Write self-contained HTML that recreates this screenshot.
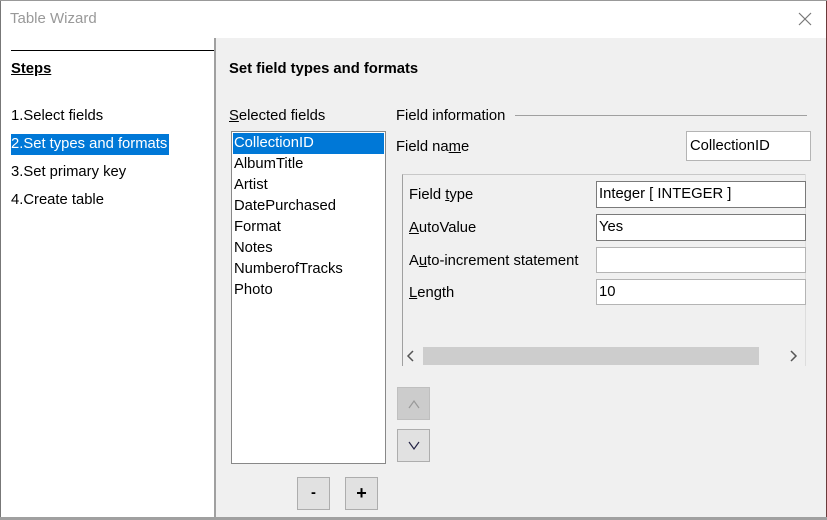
<!DOCTYPE html>
<html><head><meta charset="utf-8"><style>
*{margin:0;padding:0;box-sizing:border-box}
body{width:827px;height:520px;overflow:hidden;background:#fff;font-family:"Liberation Sans",sans-serif;font-size:14.8px;color:#000;position:relative}
.a{position:absolute;white-space:nowrap}
.l{line-height:20px}
u{text-decoration:underline}
.inp{position:absolute;background:#fff;border:1px solid #b4b4b4;padding-left:2px;line-height:24px}
.btn{position:absolute;width:33px;height:33px;border:1px solid #adadad;background:#e1e1e1;text-align:center;line-height:31px}
</style></head><body>
<div class="a" style="left:0;top:0;width:1px;height:520px;background:#777"></div>
<div class="a" style="left:826px;top:0;width:1px;height:520px;background:#6b3a3a"></div>
<div class="a" style="left:0;top:0;width:827px;height:1px;background:#999"></div>
<div class="a l" style="left:10px;top:9px;color:#999;font-size:15px">Table Wizard</div>
<svg class="a" style="left:798px;top:12px" width="14" height="14"><path d="M1 1L13 13M13 1L1 13" stroke="#777" stroke-width="1.2"/></svg>

<div class="a" style="left:215px;top:38px;width:611px;height:480px;background:#f0f0f0"></div>
<div class="a" style="left:214px;top:38px;width:2px;height:480px;background:#a0a0a0"></div>
<div class="a" style="left:0;top:517px;width:827px;height:3px;background:#a0a0a0"></div>

<div class="a" style="left:11px;top:50px;width:203px;height:1px;background:#000"></div>
<div class="a l" style="left:11px;top:59px;font-weight:bold"><u>Steps</u></div>
<div class="a l" style="left:11px;top:106px">1.Select fields</div>
<div class="a l" style="left:11px;top:134px;background:#0078d7;color:#fff;padding-right:2px;height:21px">2.Set types and formats</div>
<div class="a l" style="left:11px;top:162px">3.Set primary key</div>
<div class="a l" style="left:11px;top:190px">4.Create table</div>

<div class="a l" style="left:229px;top:59px;font-weight:bold">Set field types and formats</div>
<div class="a l" style="left:229px;top:106px"><u>S</u>elected fields</div>
<div class="a" style="left:231px;top:131px;width:155px;height:333px;background:#fff;border:1px solid #888"></div>
<div class="a" style="left:233px;top:133px;width:151px;height:21px;background:#0078d7"></div>
<div class="a l" style="left:234px;top:133px;line-height:21px;color:#fff">CollectionID</div>
<div class="a" style="left:234px;top:154px;line-height:21px">AlbumTitle<br>Artist<br>DatePurchased<br>Format<br>Notes<br>NumberofTracks<br>Photo</div>

<div class="a l" style="left:396px;top:106px">Field information</div>
<div class="a" style="left:515px;top:115px;width:292px;height:1px;background:#a0a0a0"></div>
<div class="a l" style="left:396px;top:137px">Field na<u>m</u>e</div>
<div class="inp" style="left:686px;top:131px;width:125px;height:30px;line-height:28px;padding-left:3px">CollectionID</div>

<div class="a" style="left:402px;top:174px;width:404px;height:192px;border-left:1px solid #a0a0a0;border-top:1px solid #c8c8c8"></div>
<div class="a" style="left:805px;top:174px;width:1px;height:192px;background:#ddd"></div>
<div class="a l" style="left:409px;top:185px">Field <u>t</u>ype</div>
<div class="inp" style="left:596px;top:181px;width:210px;height:27px;border-color:#7a7a7a">Integer [ INTEGER ]</div>
<div class="a l" style="left:409px;top:218px"><u>A</u>utoValue</div>
<div class="inp" style="left:596px;top:214px;width:210px;height:27px;border-color:#7a7a7a">Yes</div>
<div class="a l" style="left:409px;top:251px">A<u>u</u>to-increment statement</div>
<div class="inp" style="left:596px;top:247px;width:210px;height:26px"></div>
<div class="a l" style="left:409px;top:283px"><u>L</u>ength</div>
<div class="inp" style="left:596px;top:279px;width:210px;height:26px">10</div>
<div class="a" style="left:403px;top:346px;width:402px;height:20px;background:#f0f0f0"></div>
<div class="a" style="left:423px;top:347px;width:336px;height:18px;background:#cdcdcd"></div>
<svg class="a" style="left:406px;top:350px" width="10" height="12"><path d="M7 1L2 6L7 11" fill="none" stroke="#555" stroke-width="1.5"/></svg>
<svg class="a" style="left:788px;top:350px" width="10" height="12"><path d="M3 1L8 6L3 11" fill="none" stroke="#555" stroke-width="1.5"/></svg>

<div class="btn" style="left:397px;top:387px;background:#cccccc;border-color:#bfbfbf"><svg width="12" height="10" style="margin-top:11px"><path d="M1 9L6 2L11 9" fill="none" stroke="#999" stroke-width="1.2"/></svg></div>
<div class="btn" style="left:397px;top:429px"><svg width="12" height="10" style="margin-top:11px"><path d="M1 1L6 8L11 1" fill="none" stroke="#224" stroke-width="1.2"/></svg></div>
<div class="btn" style="left:297px;top:477px;font-weight:bold">-</div>
<div class="btn" style="left:345px;top:477px;font-weight:bold;font-size:18px">+</div>
</body></html>
